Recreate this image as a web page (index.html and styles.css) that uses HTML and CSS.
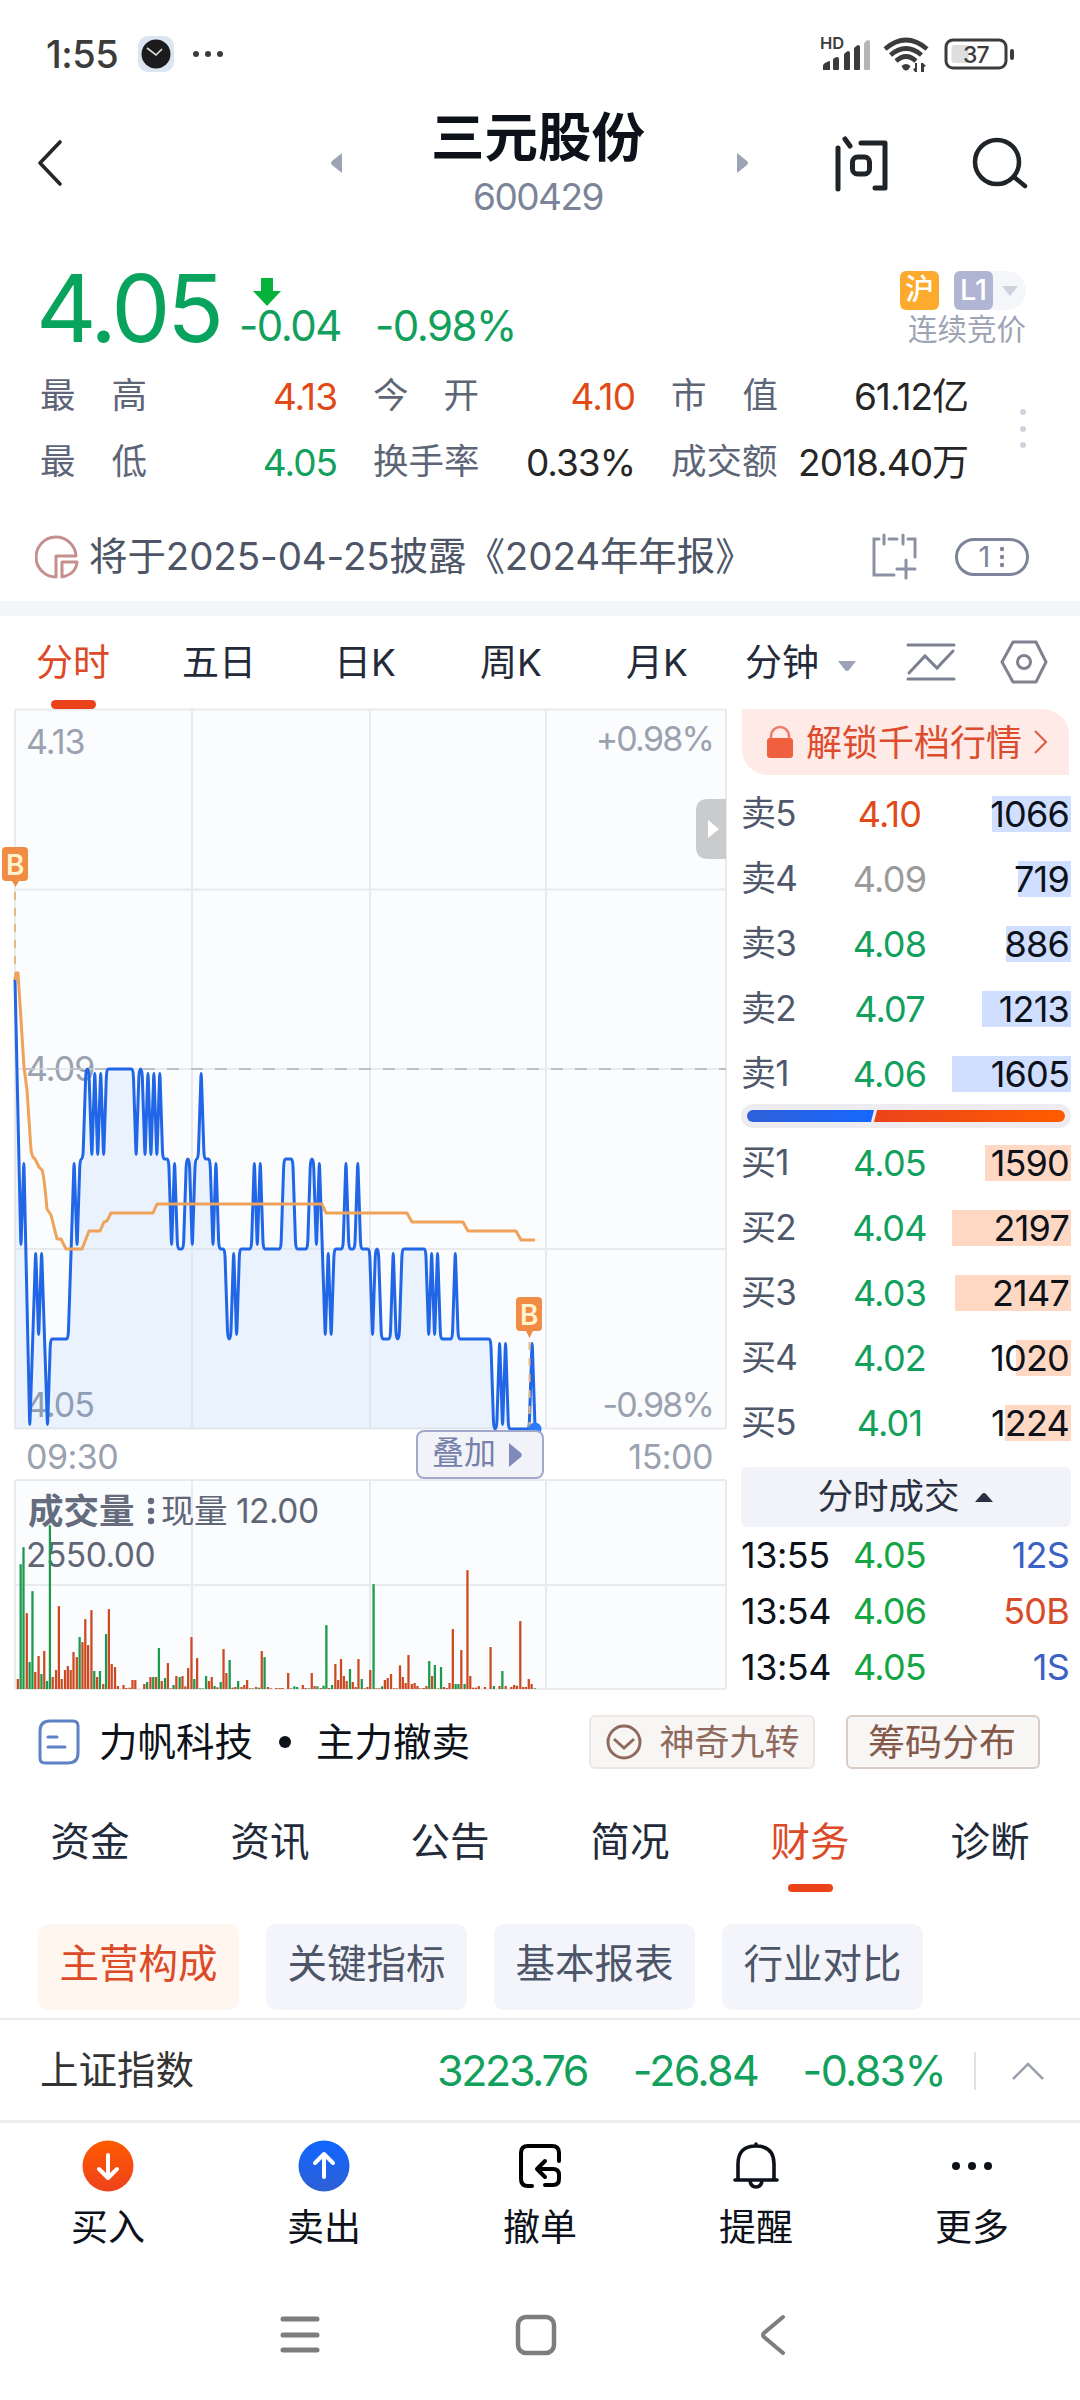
FILE: index.html
```html
<!DOCTYPE html>
<html lang="zh-CN">
<head>
    <meta charset="UTF-8">
    <meta name="viewport" content="width=device-width, initial-scale=1.0">
    <title>三元股份 600429</title>
    <link rel="stylesheet" href="styles.css">
</head>
<body>
    <div class="status-bar">
        <span class="clock">1:55</span>
        <svg class="app-icon" width="36" height="36" viewBox="0 0 36 36">
            <rect width="36" height="36" rx="10" fill="#dce6f2"/>
            <circle cx="18" cy="18" r="14.5" fill="#1b1b1d"/>
            <path d="M9 12l9 7 6-6" fill="none" stroke="#ddd" stroke-width="1.6"/>
        </svg>
        <svg class="more-dots" width="36" height="8" viewBox="0 0 36 8" fill="#3c3c3c">
            <circle cx="5" cy="4" r="3"/><circle cx="17" cy="4" r="3"/><circle cx="29" cy="4" r="3"/>
        </svg>
        <svg class="signals" width="198" height="40" viewBox="0 0 198 40" fill="#3c3c3c">
            <text class="hd" x="0" y="15">HD</text>
            <path d="M3 36v-4q0-2 2-3l4-2q1 0 1 1v8zM13 35v-9q0-2 4-3 2 0 2 2v10q0 1-1 1h-4q-1 0-1-1zM24 35v-14q0-2 4-4 2 0 2 2v16q0 1-1 1h-4q-1 0-1-1zM34 35v-20q0-2 4-4 2 0 2 2v22q0 1-1 1h-4q-1 0-1-1z"/>
            <path fill="#b5b5b5" d="M44 35v-25q0-2 4-4 2 0 2 2v27q0 1-1 1h-4q-1 0-1-1z"/>
            <g fill="none" stroke="#3c3c3c" stroke-width="4.6">
                <path d="M65 15q21-18 42 0"/>
                <path d="M70.500 21q15.500-13 31 0"/>
                <path d="M76 27q10-9 20 0"/>
            </g>
            <path d="M81.500 32q4.500-4 9 0l-2 3.500q-2.500 2-5 0zM97 29v9h-2l-2-3 2-1v-5zM101 38v-9h2l3 3-2 1v5z"/>
            <rect x="126" y="6" width="60" height="28" rx="7" fill="none" stroke="#3c3c3c" stroke-width="3"/>
            <rect x="131.500" y="11" width="17" height="18" rx="3" fill="#dedede"/>
            <rect x="190" y="15" width="4" height="11" rx="2"/>
            <text class="battery" x="143" y="29">37</text>
        </svg>
    </div>

    <header class="header">
        <svg class="back" width="30" height="50" viewBox="0 0 30 50"><path d="M25 4L5 25l20 21" fill="none" stroke="#262626" stroke-width="3.600" stroke-linecap="round" stroke-linejoin="round"/></svg>
        <div class="stock-switch">
            <svg width="12" height="20" viewBox="0 0 12 20"><path d="M11 0v20L1 12q-2-2 0-4z" fill="#9ba3b5"/></svg>
            <div class="stock-title">
                <h1>三元股份</h1>
                <p>600429</p>
            </div>
            <svg width="12" height="20" viewBox="0 0 12 20"><path d="M1 0v20l10-8q2-2 0-4z" fill="#9ba3b5"/></svg>
        </div>
        <div class="header-icons">
            <svg width="56" height="60" viewBox="0 0 56 60" fill="none" stroke="#1f2429" stroke-width="5" stroke-linecap="round" stroke-linejoin="round">
                <path d="M5 15v41M12 6l5 7M28 10h24v45H42"/>
                <rect x="19.500" y="24" width="17" height="17" rx="5"/>
            </svg>
            <svg width="56" height="54" viewBox="0 0 56 54" fill="none" stroke="#1f2429" stroke-width="4.500" stroke-linecap="round">
                <circle cx="25" cy="26" r="22"/><path d="M42 41l11 9"/>
            </svg>
        </div>
    </header>

    <section class="quote">
        <div class="price-row">
            <span class="price">4.05</span>
            <div class="change">
                <svg width="28" height="30" viewBox="0 0 28 30"><path d="M8 1h12v13h8L14 29 0 14h8z" fill="#05b33c"/></svg>
                <div class="change-values"><span>-0.04</span><span>-0.98%</span></div>
            </div>
            <div class="market">
                <div class="badges">
                    <b class="badge sh">沪</b>
                    <span class="level"><b class="badge l1">L1</b><svg width="18" height="10" viewBox="0 0 18 10"><path d="M1 0h16L9 10z" fill="#cfd2da"/></svg></span>
                </div>
                <p>连续竞价</p>
            </div>
        </div>
        <div class="stats-row">
            <div class="stats">
                <span class="label">最<i></i>高</span><span class="value up">4.13</span>
                <span class="label">今<i></i>开</span><span class="value up">4.10</span>
                <span class="label">市<i></i>值</span><span class="value">61.12亿</span>
                <span class="label">最<i></i>低</span><span class="value down">4.05</span>
                <span class="label">换手率</span><span class="value">0.33%</span>
                <span class="label">成交额</span><span class="value">2018.40万</span>
            </div>
            <svg width="8" height="42" viewBox="0 0 8 42" fill="#cfd3dc"><circle cx="4" cy="4" r="3"/><circle cx="4" cy="21" r="3"/><circle cx="4" cy="37" r="3"/></svg>
        </div>
        <div class="notice">
            <svg width="44" height="46" viewBox="0 0 44 46" fill="none" stroke="#c58f8d" stroke-width="3">
                <path d="M21 43A20 20 0 1 1 41 22H21z" stroke-linejoin="round"/>
                <path d="M27 43V28h15q-1 12-15 15z" stroke-linejoin="round"/>
            </svg>
            <span class="notice-text">将于2025-04-25披露《2024年年报》</span>
            <svg class="calendar" width="46" height="48" viewBox="0 0 46 48" fill="none" stroke="#8b91a3" stroke-width="3" stroke-linecap="round">
                <path d="M8 6H3v36h20M18 6h8M37 6h7v18M13 2v9M32 2v9M35 27v18M26 36h18"/>
            </svg>
            <span class="count">1<svg width="6" height="22" viewBox="0 0 6 22" fill="#7b8499"><circle cx="3" cy="3" r="2.200"/><circle cx="3" cy="11" r="2.200"/><circle cx="3" cy="19" r="2.200"/></svg></span>
        </div>
    </section>

    <nav class="period-tabs">
        <span class="active">分时</span>
        <span>五日</span>
        <span>日K</span>
        <span>周K</span>
        <span>月K</span>
        <span class="minute">分钟<svg width="20" height="12" viewBox="0 0 20 12"><path d="M1 0h18l-7 9q-2 2-4 0z" fill="#9ba3b5"/></svg></span>
        <svg width="50" height="42" viewBox="0 0 50 42" fill="none" stroke="#7b8191" stroke-width="3" stroke-linecap="round"><path d="M2 4h46M2 38h46M3 32l16-17 12 12 16-17"/></svg>
        <svg width="48" height="44" viewBox="0 0 48 44" fill="none" stroke="#84808f" stroke-width="3" stroke-linejoin="round"><path d="M13 2h23l10 20-10 20H13L2 22z"/><circle cx="24" cy="22" r="6.500"/></svg>
    </nav>

    <main class="board">
        <div class="charts">
            <svg class="chart" id="priceChart" width="741" height="732" viewBox="0 708 741 732">
                <rect x="15" y="709" width="711" height="720" fill="#fbfcfe"/>
                <text x="26" y="754">4.13</text>
                <text class="rate" x="713" y="751" text-anchor="end">+0.98%</text>
                <text x="26" y="1081">4.09</text>
                <text x="26" y="1417">4.05</text>
                <text class="rate" x="713" y="1417" text-anchor="end">-0.98%</text>
                <path id="priceArea" fill="#2b7bff" fill-opacity=".08"/>
                <path class="grid" d="M15 709.500H726M15 889.500H726M15 1069H726M15 1249H726M15 1428.500H726M15 709V1429M192 709V1429M370 709V1429M546 709V1429M726 709V1429"/>
                <path d="M23 1069H726" stroke="#bfbfc8" stroke-width="2" stroke-dasharray="12 12"/>
                <path class="trade-line" d="M15 892V972"/>
                <path id="priceLine" fill="none" stroke="#2166e6" stroke-width="3" stroke-linejoin="round"/>
                <path fill="none" stroke="#efa259" stroke-width="3" stroke-linejoin="round" d="M15 980L16 973H18L24 1067 27 1090 31 1150Q32 1157 35 1159L39 1167 42 1170Q44 1175 47 1209L51 1215 57 1239H61L66 1249H82L89 1231H100L104 1222 107 1221 111 1213H153L157 1204H322L326 1213H407L412 1222H463L468 1231H516L521 1240H535"/>
                <path class="trade-line" d="M529.500 1342V1428"/>
                <circle cx="535" cy="1429" r="6.500" fill="#2b7bff"/>
                <path class="marker" d="M6 847H24q4 0 4 4V877q0 4-4 4H19L15.500 887 12 881H6q-4 0-4-4V851q0-4 4-4z"/>
                <text class="marker-text" x="15.200" y="875" text-anchor="middle">B</text>
                <path class="marker" d="M520 1297H538q4 0 4 4V1327q0 4-4 4H533L529.500 1338 526 1331H520q-4 0-4-4V1301q0-4 4-4z"/>
                <text class="marker-text" x="529.200" y="1325" text-anchor="middle">B</text>
                <path d="M726 799H708q-12 0-12 12V847q0 12 12 12H726z" fill="#c9cbcd"/>
                <path d="M708 820V838L719 829z" fill="#fff"/>
            </svg>
            <div class="time-axis">
                <span>09:30</span>
                <button class="overlay-btn">叠加<svg width="13" height="24" viewBox="0 0 13 24"><path d="M0 0v24l12-10q1.500-2 0-4z" fill="#7f89ba"/></svg></button>
                <span class="end">15:00</span>
            </div>
            <svg class="chart" id="volumeChart" width="741" height="214" viewBox="0 1478 741 214">
                <rect x="15" y="1480" width="711" height="209" fill="#fbfcfe"/>
                <path class="grid" d="M15 1480H726M15 1585H726M15 1689H726M15 1480V1689M192 1480V1689M370 1480V1689M546 1480V1689M726 1480V1689"/>
                <text class="vol-title" x="28" y="1524">成交量</text>
                <g fill="#646c7d"><circle cx="151" cy="1501" r="3.200"/><circle cx="151" cy="1511" r="3.200"/><circle cx="151" cy="1521" r="3.200"/></g>
                <text class="vol-text" x="161" y="1523">现量 12.00</text>
                <text class="vol-text" x="26" y="1567">2550.00</text>
                <svg id="volumeBars" x="15" y="1480" width="711" height="209" viewBox="32 0 1507 628" preserveAspectRatio="none"></svg>
            </svg>
        </div>

        <aside class="book">
            <div class="unlock">
                <svg width="28" height="34" viewBox="0 0 28 34"><path d="M5 16v-5a9 9 0 0 1 18 0v5" fill="none" stroke="#ee7b68" stroke-width="2.500"/><rect x="1" y="13" width="26" height="20" rx="3" fill="#f0603f"/></svg>
                <span>解锁千档行情</span>
                <svg width="14" height="24" viewBox="0 0 14 24"><path d="M1 1l11 11L1 23" fill="none" stroke="#e2593c" stroke-width="2"/></svg>
            </div>
            <div class="depth sell">
                <div class="order"><span>卖5</span><span class="p up">4.10</span><span class="q"><i style="width:79px"></i>1066</span></div>
                <div class="order"><span>卖4</span><span class="p flat">4.09</span><span class="q"><i style="width:53px"></i>719</span></div>
                <div class="order"><span>卖3</span><span class="p down">4.08</span><span class="q"><i style="width:65px"></i>886</span></div>
                <div class="order"><span>卖2</span><span class="p down">4.07</span><span class="q"><i style="width:89px"></i>1213</span></div>
                <div class="order"><span>卖1</span><span class="p down">4.06</span><span class="q"><i style="width:119px"></i>1605</span></div>
            </div>
            <div class="ratio"><i class="ratio-sell"></i><i class="ratio-buy"></i></div>
            <div class="depth buy">
                <div class="order"><span>买1</span><span class="p down">4.05</span><span class="q"><i style="width:86px"></i>1590</span></div>
                <div class="order"><span>买2</span><span class="p down">4.04</span><span class="q"><i style="width:119px"></i>2197</span></div>
                <div class="order"><span>买3</span><span class="p down">4.03</span><span class="q"><i style="width:116px"></i>2147</span></div>
                <div class="order"><span>买4</span><span class="p down">4.02</span><span class="q"><i style="width:55px"></i>1020</span></div>
                <div class="order"><span>买5</span><span class="p down">4.01</span><span class="q"><i style="width:66px"></i>1224</span></div>
            </div>
            <div class="deals-title">分时成交<svg width="18" height="10" viewBox="0 0 18 10"><path d="M0 10h18l-7-8q-2-2-4 0z" fill="#2a3142"/></svg></div>
            <div class="deals">
                <div class="deal"><span>13:55</span><span class="p">4.05</span><span class="q s">12S</span></div>
                <div class="deal"><span>13:54</span><span class="p">4.06</span><span class="q b">50B</span></div>
                <div class="deal"><span>13:54</span><span class="p">4.05</span><span class="q s">1S</span></div>
            </div>
        </aside>
    </main>

    <section class="news">
        <svg width="42" height="46" viewBox="0 0 42 46" fill="none" stroke="#5f82c6" stroke-width="3" stroke-linecap="round"><path d="M12 2h23q5 0 5 5v27q0 10-10 10H7q-5 0-5-5V12Q2 2 12 2z"/><path d="M10 18h9M10 28h17"/></svg>
        <span class="news-text">力帆科技</span>
        <i class="dot"></i>
        <span class="news-text">主力撤卖</span>
        <button class="tool nine"><svg width="36" height="36" viewBox="0 0 36 36" fill="none" stroke="#8f6a5c" stroke-width="3"><circle cx="18" cy="18" r="16"/><path d="M8 15l10 9 10-9"/></svg>神奇九转</button>
        <button class="tool chips-btn">筹码分布</button>
    </section>

    <nav class="info-tabs">
        <span>资金</span>
        <span>资讯</span>
        <span>公告</span>
        <span>简况</span>
        <span class="active">财务</span>
        <span>诊断</span>
    </nav>

    <div class="chips">
        <span class="chip active">主营构成</span>
        <span class="chip">关键指标</span>
        <span class="chip">基本报表</span>
        <span class="chip">行业对比</span>
    </div>

    <div class="index-bar">
        <span class="index-name">上证指数</span>
        <span class="index-value">3223.76</span>
        <span class="index-diff">-26.84</span>
        <span class="index-rate">-0.83%</span>
        <i class="separator"></i>
        <svg width="32" height="18" viewBox="0 0 32 18"><path d="M1 17L16 2l15 15" fill="none" stroke="#9ba0ac" stroke-width="2.500"/></svg>
    </div>

    <footer class="actions">
        <div class="action">
            <svg width="52" height="52" viewBox="0 0 52 52"><defs><linearGradient id="buyFill" x2="0" y2="1"><stop stop-color="#ff5a00"/><stop offset="1" stop-color="#ee421c"/></linearGradient></defs><circle cx="26" cy="26" r="25.500" fill="url(#buyFill)"/><path d="M26 15v22M17 29l9 9 9-9" fill="none" stroke="#fff" stroke-width="4" stroke-linecap="round" stroke-linejoin="round"/></svg>
            <span>买入</span>
        </div>
        <div class="action">
            <svg width="52" height="52" viewBox="0 0 52 52"><defs><linearGradient id="sellFill" x2="0" y2="1"><stop stop-color="#0f66ff"/><stop offset="1" stop-color="#2f5fd6"/></linearGradient></defs><circle cx="26" cy="26" r="25.500" fill="url(#sellFill)"/><path d="M26 37V15M17 23l9-9 9 9" fill="none" stroke="#fff" stroke-width="4" stroke-linecap="round" stroke-linejoin="round"/></svg>
            <span>卖出</span>
        </div>
        <div class="action">
            <svg width="52" height="52" viewBox="0 0 52 52" fill="none" stroke="#000" stroke-width="4" stroke-linecap="round" stroke-linejoin="round"><path d="M18 46h-4q-7 0-7-7V13q0-7 7-7h24q7 0 7 7v8"/><path d="M31 21l-8 8 8 8M24 29h15q6 0 6 6v4q0 6-6 6h-8"/></svg>
            <span>撤单</span>
        </div>
        <div class="action">
            <svg width="52" height="52" viewBox="0 0 52 52" fill="none" stroke="#0d1119" stroke-width="3.600" stroke-linecap="round" stroke-linejoin="round"><path d="M8 40V24Q8 6 26 6t18 18v16M5 40h42M20 41q1 6 6 6t6-6M26 4v2"/></svg>
            <span>提醒</span>
        </div>
        <div class="action">
            <svg width="52" height="52" viewBox="0 0 52 52" fill="#0d1119"><circle cx="10" cy="26" r="4"/><circle cx="26" cy="26" r="4"/><circle cx="42" cy="26" r="4"/></svg>
            <span>更多</span>
        </div>
    </footer>

    <div class="system-nav">
        <svg width="40" height="44" viewBox="0 0 40 44" stroke="#7d7d7d" stroke-width="5" stroke-linecap="round"><path d="M3 6h34M3 22h34M3 37h34"/></svg>
        <svg width="44" height="44" viewBox="0 0 44 44"><rect x="4" y="4" width="36" height="36" rx="8" fill="none" stroke="#7d7d7d" stroke-width="4.500"/></svg>
        <svg width="30" height="44" viewBox="0 0 30 44"><path d="M25 4L6 20q-2 2 0 4l19 16" fill="none" stroke="#7d7d7d" stroke-width="4" stroke-linecap="round"/></svg>
    </div>

    <script src="chart.js"></script>
</body>
</html>
```
FILE: styles.css
```css
* {
    box-sizing: border-box;
    margin: 0;
    padding: 0;
}

body {
    width: 1080px;
    height: 2400px;
    overflow: hidden;
    background: #fff;
    color: #0d1119;
    font-family: Inter, "Noto Sans CJK SC", sans-serif;
    line-height: 1;
}

svg {
    display: block;
    flex-shrink: 0;
}

button {
    font: inherit;
}

.up {
    color: #e04a16;
}

.down {
    color: #12a05d;
}

.flat {
    color: #9b9b9b;
}

/* status bar */
.status-bar {
    display: flex;
    align-items: center;
    height: 108px;
    padding-left: 46px;
    color: #3c3c3c;
}

.clock {
    width: 92px;
    font-size: 38px;
    font-weight: 500;
    letter-spacing: -.5px;
}

.more-dots {
    margin-left: 17px;
}

.signals {
    margin-left: 593px;
}

.hd {
    font-size: 16.500px;
    font-weight: 600;
}

.battery {
    font-size: 23px;
    font-weight: 500;
    letter-spacing: -1px;
}

/* header */
.header {
    display: grid;
    grid-template-columns: 331px 417px 1fr;
    height: 128px;
}

.back {
    margin: 30px 0 0 35px;
}

.stock-switch {
    display: flex;
    justify-content: space-between;
}

.stock-switch > svg {
    margin-top: 45px;
}

.stock-title {
    padding: 3px 3px 0 0;
    text-align: center;
}

.stock-title h1 {
    font-size: 53.500px;
    font-weight: 700;
}

.stock-title p {
    margin-top: 13px;
    color: #7b8499;
    font-size: 37px;
    letter-spacing: -1.500px;
}

.header-icons {
    display: flex;
    gap: 83px;
    padding: 25px 0 0 85px;
}

.header-icons svg:last-child {
    margin-top: 3px;
}

/* quote */
.quote {
    height: 380px;
    border-bottom: 15px solid #f3f5f9;
}

.price-row {
    display: flex;
    height: 126px;
    padding: 26px 54px 0 36px;
}

.price {
    width: 203px;
    margin-top: -1px;
    color: #08a35c;
    font-size: 94px;
    letter-spacing: -3.500px;
}

.change {
    padding-top: 15px;
    color: #12a05d;
    font-size: 42px;
}

.change > svg {
    margin-left: 14px;
}

.change-values {
    display: flex;
    gap: 34px;
    margin-top: -2px;
    letter-spacing: -1.500px;
}

.market {
    margin-left: auto;
    color: #9ea4b3;
    font-size: 29.500px;
}

.market p {
    margin-top: 5px;
    text-align: right;
}

.badges {
    display: flex;
    justify-content: flex-end;
    gap: 15px;
    margin-top: 9px;
}

.badge {
    width: 39px;
    height: 39px;
    border-radius: 6px;
    color: #fff;
    font-size: 29px;
    font-weight: 500;
    line-height: 38px;
    text-align: center;
}

.badge.sh {
    background: #fdab2e;
}

.badge.l1 {
    background: #b0b5d3;
}

.level {
    display: flex;
    align-items: center;
    gap: 8px;
    padding-right: 7px;
    border-radius: 6px 20px 20px 6px;
    background: #f5f6f9;
}

.stats-row {
    display: flex;
    align-items: center;
    height: 132px;
    padding-top: 2px;
}

.stats {
    display: grid;
    grid-template-columns: 107px 190px 142px 156px 143px 190px;
    grid-template-rows: 66px 66px;
    align-items: center;
    width: 979px;
    padding-left: 40px;
    margin-right: 40px;
}

.label {
    display: flex;
    color: #5d6577;
    font-size: 35.500px;
}

.label:not(:nth-child(6n + 1)) {
    padding-left: 36px;
    white-space: nowrap;
}

.label i {
    width: 36px;
}

.value {
    color: #262626;
    font-size: 37px;
    letter-spacing: -1px;
    text-align: right;
    white-space: nowrap;
}

.value.up {
    color: #e04a16;
}

.value.down {
    color: #12a05d;
}

.notice {
    display: flex;
    align-items: center;
    height: 107px;
    padding: 18px 51px 0 35px;
    color: #4d5567;
}

.notice-text {
    margin-left: 10px;
    font-size: 38.500px;
    letter-spacing: -.1px;
    white-space: nowrap;
}

.calendar {
    margin-left: auto;
}

.count {
    display: flex;
    align-items: center;
    justify-content: center;
    gap: 9px;
    width: 74px;
    height: 38px;
    margin-left: 38px;
    border: 3px solid #7b8499;
    border-radius: 20px;
    color: #7b8499;
    font-size: 29px;
}

/* chart tabs */
.period-tabs {
    display: grid;
    grid-template-columns: 146px 146px 146px 146px 146px 161px 65px 92px;
    align-items: center;
    height: 92px;
    color: #232a39;
    font-size: 37px;
    text-align: center;
}

.period-tabs > span {
    position: relative;
}

.period-tabs > .minute {
    display: flex;
    align-items: center;
    gap: 18px;
    padding-left: 15px;
    white-space: nowrap;
}

.period-tabs .minute svg {
    margin-top: 10px;
}

.period-tabs > svg {
    justify-self: end;
}

.period-tabs .active,
.info-tabs .active {
    color: #dc4a27;
}

.period-tabs .active::after,
.info-tabs .active::after {
    content: "";
    position: absolute;
    left: 50%;
    bottom: -28px;
    width: 45px;
    height: 9px;
    margin-left: -22px;
    border-radius: 5px;
    background: #ec4219;
}

/* charts */
.board {
    display: flex;
    height: 984px;
}

.charts {
    width: 741px;
}

.chart {
    fill: #9aa1af;
    font-size: 34px;
    letter-spacing: -1px;
}

.rate {
    letter-spacing: -1.800px;
}

.grid {
    fill: none;
    stroke: #d8dbe0;
    stroke-opacity: .55;
    stroke-width: 2;
}

.trade-line {
    stroke: #ecb882;
    stroke-width: 2;
    stroke-dasharray: 8 8;
}

.marker {
    fill: #f08c43;
}

.marker-text {
    fill: #fff3d0;
    font-size: 28px;
    font-weight: 600;
    letter-spacing: 0;
}

.time-axis {
    display: flex;
    height: 38px;
    padding: 0 28px 0 26px;
    color: #9aa1af;
    font-size: 34px;
    letter-spacing: -.5px;
}

.overlay-btn {
    display: flex;
    align-items: center;
    gap: 13px;
    width: 128px;
    height: 49px;
    margin: -10px 0 0 auto;
    padding: 0 0 3px 14px;
    border: 2px solid #a0a8cb;
    border-radius: 8px;
    background: #f2f3f9;
    color: #7580ab;
    font-size: 32px;
    letter-spacing: 0;
}

.overlay-btn svg {
    margin-top: 3px;
}

.end {
    width: 169px;
    text-align: right;
}

.vol-title {
    fill: #646c7d;
    font-size: 35.500px;
    font-weight: 700;
    letter-spacing: 0;
}

.vol-text {
    fill: #5f6675;
    font-size: 33.500px;
    letter-spacing: -.5px;
}

/* order book */
.book {
    width: 330px;
    padding-top: 1px;
}

.unlock {
    display: flex;
    align-items: center;
    gap: 12px;
    height: 66px;
    margin: 0 2px 0 1px;
    padding-left: 24px;
    border-radius: 0 26px 0 26px;
    background: #feeae7;
    color: #dd4d2d;
    font-size: 36px;
}

.unlock > span {
    padding-top: 2px;
    white-space: nowrap;
}

.depth {
    padding-top: 6px;
}

.depth.buy {
    padding-top: 2px;
}

.order,
.deal {
    display: grid;
    grid-template-columns: 90px 120px 120px;
    align-items: center;
    height: 65px;
    font-size: 36px;
    letter-spacing: -.8px;
}

.order > span:first-child {
    color: #4f586b;
    font-size: 35px;
}

.p {
    padding-right: 3px;
    text-align: center;
}

.q {
    position: relative;
    z-index: 0;
    padding-right: 2px;
    text-align: right;
}

.q i {
    position: absolute;
    z-index: -1;
    top: 0;
    right: 0;
    height: 36px;
    background: #d0deff;
}

.buy .q i {
    background: #ffd8c4;
}

.ratio {
    display: flex;
    height: 24px;
    margin-top: -2px;
    padding: 6px;
    border-radius: 12px;
    background: #ededf1;
}

.ratio-sell {
    width: 127px;
    margin-right: -1px;
    border-radius: 6px 0 0 6px;
    background: linear-gradient(90deg, #2f60d8, #1768ff);
    clip-path: polygon(0 0, 100% 0, calc(100% - 3px) 100%, 0 100%);
}

.ratio-buy {
    flex: 1;
    border-radius: 0 6px 6px 0;
    background: linear-gradient(90deg, #ec431c, #ff5c00);
    clip-path: polygon(4px 0, 100% 0, 100% 100%, 1px 100%);
}

.deals-title {
    display: flex;
    align-items: center;
    justify-content: center;
    gap: 15px;
    height: 60px;
    margin-top: 12px;
    padding-right: 2px;
    border-radius: 6px;
    background: #f2f3f8;
    color: #2a3142;
    font-size: 35.500px;
}

.deal {
    height: 56px;
}

.deal > span:first-child {
    letter-spacing: -.5px;
}

.deal .p {
    color: #14a544;
}

.deal .s {
    color: #3a62c4;
}

.deal .b {
    color: #d84c2b;
}

/* news strip */
.news {
    display: flex;
    align-items: center;
    height: 100px;
    padding: 0 40px 0 38px;
}

.news-text {
    margin-left: 19px;
    font-size: 38.500px;
}

.dot {
    width: 12px;
    height: 12px;
    margin: 0 6px 0 26px;
    border-radius: 50%;
    background: #0d1119;
}

.tool {
    display: flex;
    align-items: center;
    justify-content: center;
    height: 54px;
    border: 2px solid #ece7e4;
    border-radius: 6px;
    background: #f8f6f5;
    color: #8f6a5c;
    font-size: 35px;
}

.nine {
    gap: 17px;
    width: 226px;
    margin-left: auto;
    padding-left: 2px;
}

.chips-btn {
    width: 194px;
    margin-left: 31px;
    padding-right: 2px;
    border-color: #d8ccc5;
    color: #84594a;
    font-size: 37px;
}

/* info tabs */
.info-tabs {
    display: grid;
    grid-template-columns: repeat(6, 180px);
    align-items: center;
    height: 96px;
    padding-top: 5px;
    color: #232a39;
    font-size: 39.500px;
    text-align: center;
}

.info-tabs span {
    position: relative;
}

.info-tabs .active::after {
    bottom: -30px;
    height: 8px;
}

.chips {
    display: flex;
    gap: 27px;
    height: 132px;
    padding: 36px 0 0 38px;
    border-bottom: 2px solid #ebebed;
}

.chip {
    width: 201px;
    height: 86px;
    border-radius: 10px;
    background: #f4f5fa;
    color: #4d5569;
    font-size: 39.500px;
    line-height: 81px;
    text-align: center;
}

.chip.active {
    background: #fff6f0;
    color: #dc4a27;
}

/* index bar */
.index-bar {
    display: flex;
    align-items: center;
    height: 103px;
    padding: 1px 36px 0 40px;
    border-bottom: 3px solid #ececee;
    color: #12a05d;
    font-size: 43px;
    letter-spacing: -2px;
}

.index-name {
    color: #333;
    font-size: 38.500px;
    letter-spacing: 0;
}

.index-value {
    margin-left: auto;
    letter-spacing: -2.400px;
}

.index-diff {
    width: 171px;
    letter-spacing: -1.700px;
    text-align: right;
}

.index-rate {
    width: 187px;
    letter-spacing: -1.700px;
    text-align: right;
}

.separator {
    width: 2px;
    height: 38px;
    margin: 0 36px 0 29px;
    background: #dfe1e6;
}

/* bottom actions */
.actions {
    display: grid;
    grid-template-columns: repeat(5, 216px);
    height: 156px;
    padding-top: 17px;
}

.action {
    display: flex;
    flex-direction: column;
    align-items: center;
    gap: 17px;
    font-size: 37px;
}

.system-nav {
    display: flex;
    align-items: center;
    height: 112px;
    padding-left: 280px;
}

.system-nav svg:nth-child(2) {
    margin: 0 200px 0 194px;
}
```
FILE: chart.js
```js
// price per minute since 09:30: [price in cents above 400, minutes it lasts]
const runs = [
    [10, 1], [8.5, 1], [7, 1], [8, 1], [6.5, 1], [5, 1], [6, 1], [7, 1], [6, 1], [7, 1],
    [6, 1], [5, 1], [6, 7], [7, 1], [8, 1], [7, 1], [8, 2], [9, 2], [8, 1], [9, 1],
    [8, 1], [9, 1], [8, 1], [9, 10], [8, 1], [9, 2], [8, 1], [9, 1], [8, 1], [9, 1],
    [8, 1], [9, 1], [8, 3], [7, 1], [8, 1], [7, 3], [8, 2], [7, 1], [8, 2], [9, 1],
    [8, 3], [7, 1], [8, 1], [7, 3], [6, 2], [7, 1], [6, 1], [7, 5], [8, 1], [7, 1],
    [8, 1], [7, 7], [8, 4], [7, 5], [8, 2], [7, 1], [8, 1], [7, 1], [6, 1], [7, 1],
    [6, 1], [7, 4], [8, 1], [7, 3], [8, 1], [7, 4], [6, 1], [7, 2], [6, 4], [7, 1],
    [6, 2], [7, 9], [6, 1], [7, 1], [6, 1], [7, 1], [6, 5], [7, 1], [6, 12], [5, 2],
    [6, 1], [5, 1], [6, 1], [5, 8], [6, 1], [5, 1]
];

// position:height, g = falling minute, r = rising minute
const volumes = `38:30r 44:375g 50:426g 57:228r 63:81g 69:294g 75:51r 82:99r 88:45g 94:114r 100:24g 106:492g
112:36r 119:57r 125:249r 131:30r 138:57r 144:69r 150:57r 156:111r 163:96r 169:156g 175:141r 181:210r 187:132r
194:237r 200:54g 206:36r 212:54g 219:15r 225:165g 231:240r 237:75r 244:66r 250:9r 262:12r 268:3r 275:4r 281:27r
287:27r 306:15r 312:21g 319:36r 325:36g 331:36r 337:123g 343:24r 350:33g 356:78r 362:2r 368:12g 374:39r 381:36g
387:39r 393:8r 399:63r 406:156r 412:30g 418:93r 424:2g 430:2g 437:39g 443:24r 449:36r 455:9g 461:5r 468:21g
474:120r 480:48r 487:87g 493:4r 499:6r 505:24g 512:6r 518:12r 524:27r 530:2r 536:2g 543:6r 549:4g 555:114r
561:96g 568:6r 574:2r 586:3r 593:3r 599:3r 611:48r 617:2r 624:8g 630:6g 642:12r 648:3r 655:2g 661:48r 667:9r
673:8g 680:3r 686:10g 692:192g 698:3r 704:12g 711:75r 717:27r 723:90r 729:39r 735:24r 742:60g 748:21r 754:6r
760:90r 767:30g 773:2r 779:6r 785:57r 792:315g 798:2r 804:2r 810:8g 816:27r 822:33r 829:45r 835:2r 841:2r
848:71r 854:36r 860:18r 866:102r 873:15r 879:18r 885:9r 891:2r 898:3r 904:9r 910:84g 916:39r 922:72g 929:2r
935:66g 941:6r 947:3r 953:18r 960:180r 966:15g 972:15g 978:117r 985:15g 991:357r 997:39r 1003:4r 1009:4r
1015:9r 1028:6r 1040:126r 1047:9g 1059:9r 1065:54g 1072:9r 1084:6r 1090:12r 1096:10r 1103:204r 1109:6r 1115:6r
1121:30r 1127:15r 1134:2g`;

const left = 15;
const step = 2.955;
const bottom = 1429;

const points = [];
runs.forEach(([price, minutes]) => {
    for (let i = 0; i < minutes; i++) {
        points.push([left + points.length * step, bottom - (price - 5) * 90]);
    }
});

// point on the way from a to b, at most dist away from a
function towards(a, b, dist) {
    const len = Math.hypot(b[0] - a[0], b[1] - a[1]);
    const t = Math.min(dist / len, 0.5);
    return [a[0] + (b[0] - a[0]) * t, a[1] + (b[1] - a[1]) * t];
}

let d = `M${points[0]}`;
for (let i = 1; i < points.length - 1; i++) {
    const before = towards(points[i], points[i - 1], 9);
    const after = towards(points[i], points[i + 1], 9);
    d += `L${before}Q${points[i]} ${after}`;
}
const last = points[points.length - 1];
d += `L${last}`;

document.getElementById('priceLine').setAttribute('d', d);
document.getElementById('priceArea').setAttribute('d', `${d}V${bottom}H${left}Z`);

const bars = document.getElementById('volumeBars');
volumes.split(/\s+/).forEach(item => {
    const [, x, h, side] = item.match(/(\d+):(\d+)([rg])/);
    const bar = document.createElementNS('http://www.w3.org/2000/svg', 'rect');
    bar.setAttribute('x', x - 2.4);
    bar.setAttribute('y', 628 - h);
    bar.setAttribute('width', 4.8);
    bar.setAttribute('height', h);
    bar.setAttribute('fill', side === 'g' ? '#1a9a4a' : '#cc4a22');
    bars.appendChild(bar);
});
```
